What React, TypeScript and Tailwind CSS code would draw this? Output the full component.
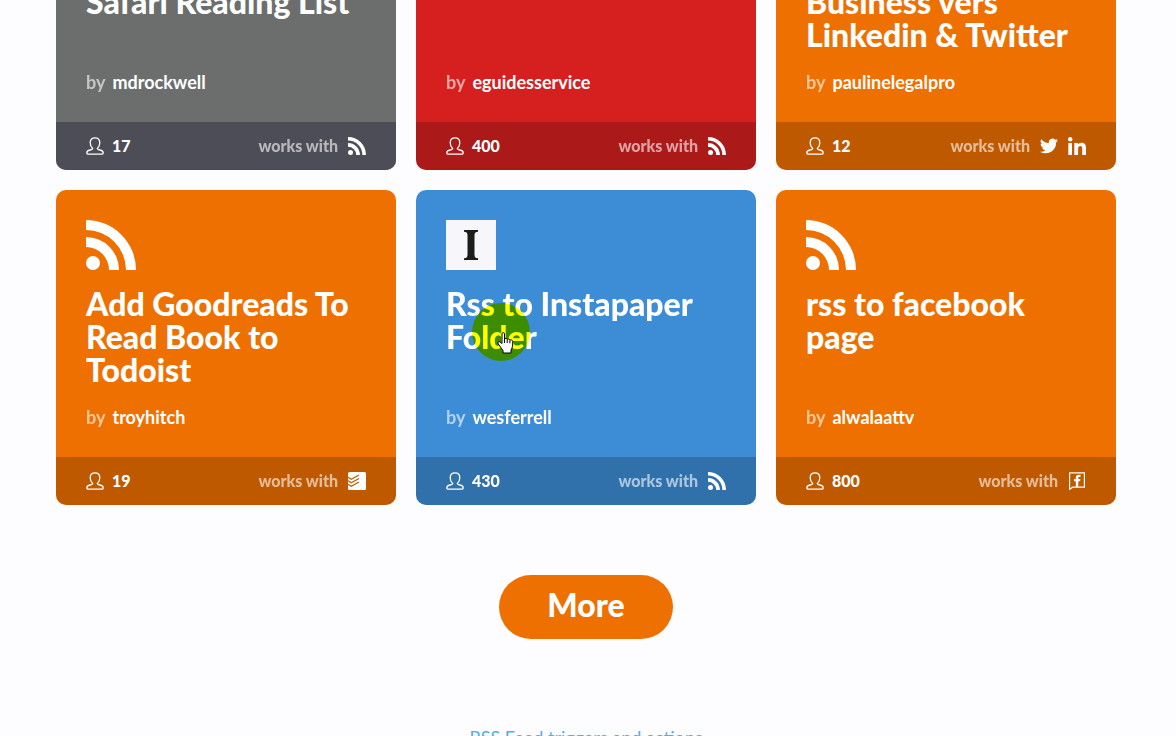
import React from "react";

type Icon = "rss" | "twitter" | "linkedin" | "todoist" | "facebook";

function Rss({ className }: { className: string }) {
  return (
    <svg viewBox="0 0 50 50" className={className} fill="currentColor" aria-hidden="true">
      <circle cx="7" cy="43" r="7" />
      <path d="M0 17a33 33 0 0 1 33 33h-10a23 23 0 0 0-23-23z" />
      <path d="M0 0a50 50 0 0 1 50 50h-10a40 40 0 0 0-40-40z" />
    </svg>
  );
}

function Instapaper({ className }: { className: string }) {
  return (
    <svg viewBox="0 0 50 50" className={className} aria-hidden="true">
      <path fill="#f7f7fb" d="M0 0h50v50H0z" />
      <path
        fill="#1c1c1a"
        d="M18 10h14v1.700c-2.700.3-3.500 1.100-3.500 3.800v19c0 2.700.8 3.500 3.500 3.800V40H18v-1.700c2.700-.3 3.500-1.100 3.500-3.800v-19c0-2.700-.8-3.500-3.500-3.800z"
      />
    </svg>
  );
}

function Person() {
  return (
    <svg viewBox="0 0 18 18" className="size-[18px]" fill="none" stroke="currentColor" strokeWidth="1.300" strokeLinejoin="round" aria-hidden="true">
      <path d="M6.700 11.500C5.300 10.300 4.200 8.300 4.200 5.700 4.200 2.500 6.200.8 9 .8s4.800 1.700 4.800 4.900c0 2.600-1.100 4.600-2.500 5.800.3.900 1.200 1.300 2.600 1.500 2.100.3 3.300 1.300 3.300 3.100 0 .7-.3 1-1 1H1.800c-.7 0-1-.3-1-1 0-1.800 1.200-2.800 3.300-3.100 1.400-.2 2.300-.6 2.600-1.500z" />
    </svg>
  );
}

function ServiceIcon({ name }: { name: Icon }) {
  const size = "size-[18px]";
  if (name === "rss") return <Rss className={size} />;
  if (name === "twitter")
    return (
      <svg viewBox="0 0 24 24" className={size} fill="currentColor" role="img" aria-label="Twitter">
        <path d="M23.950 4.570a10 10 0 0 1-2.820.770 4.960 4.960 0 0 0 2.160-2.720c-.950.560-2 .960-3.130 1.180a4.920 4.920 0 0 0-8.380 4.480C7.690 8.090 4.070 6.130 1.640 3.160a4.920 4.920 0 0 0 1.520 6.570 4.900 4.900 0 0 1-2.230-.610v.060a4.920 4.920 0 0 0 3.950 4.830 5 5 0 0 1-2.210.080 4.940 4.940 0 0 0 4.600 3.420A9.870 9.870 0 0 1 0 19.540a13.990 13.990 0 0 0 7.550 2.210c9.050 0 14-7.500 14-13.980 0-.210 0-.420-.020-.630a9.940 9.940 0 0 0 2.460-2.550z" />
      </svg>
    );
  if (name === "linkedin")
    return (
      <svg viewBox="0 0 18 18" className={size} fill="currentColor" role="img" aria-label="LinkedIn">
        <circle cx="2.200" cy="2.200" r="2.200" />
        <path d="M.3 6h3.700v12H.3zM6.300 6h3.600v1.600c.6-1.100 1.900-1.900 3.700-1.900 3.600 0 4.400 2.300 4.400 5.600V18h-3.800v-5.900c0-1.500-.1-3-1.900-3s-2.200 1.400-2.200 2.900v6H6.300z" />
      </svg>
    );
  if (name === "todoist")
    return (
      <svg viewBox="0 0 18 18" className={size} role="img" aria-label="Todoist">
        <rect width="18" height="18" rx="1.500" fill="currentColor" />
        <path d="M0 5.200 3.300 7.200 11 3M0 8.700l3.300 2L11 6.500M0 12.200l3.300 2L11 10" fill="none" stroke="#c05f00" strokeWidth="1.300" />
      </svg>
    );
  return (
    <svg viewBox="0 0 18 18" className={size} role="img" aria-label="Facebook">
      <path d="M1.600.8h14.800v14.400H4.600L1.600 17.400z" fill="none" stroke="currentColor" strokeWidth="1.200" />
      <path fill="currentColor" d="M7.800 14.800V9.200H6V7h1.800V5.700c0-2 1.100-3 3-3h1.700v2.200h-1.100c-.8 0-1.100.3-1.100 1V7h2.100l-.3 2.200h-1.800v5.600z" />
    </svg>
  );
}

function Pointer() {
  return (
    <>
      <span className="pointer-events-none absolute left-14 top-[113px] size-[58px] rounded-full bg-[#ffff00] mix-blend-multiply" />
      <svg viewBox="0 0 17 22" className="pointer-events-none absolute left-[81px] top-[142px] h-[22px] w-[17px]" aria-hidden="true">
        <path
          d="M5 1.700C5 .3 7.500.3 7.500 1.700V7c.3-1 2.500-.9 2.700.4.500-.8 2.500-.6 2.700.8.700-.7 2.800-.3 2.800 1.300 0 3.500 0 6-1.700 8.500V21H6v-2.500C4.500 16.500 3 14 1.300 12c-1-1.300-.2-2.900 1.500-2.200L5 11.500z"
          fill="#fff"
          stroke="#000"
          strokeWidth="1"
          strokeLinejoin="round"
        />
        <path d="M7.500 7v4M10.200 7.500v3.500M12.900 8.300v3" stroke="#000" fill="none" />
      </svg>
    </>
  );
}

type CardProps = {
  tone: string;
  shade?: string;
  logo?: React.ReactNode;
  title: string;
  author: string;
  users: number;
  services: Icon[];
  continued?: boolean;
  children?: React.ReactNode;
};

function Card({ tone, shade = "bg-black/20", logo, title, author, users, services, continued, children }: CardProps) {
  return (
    <article className={`relative isolate overflow-hidden text-white ${tone} ${continued ? "rounded-b-[10px]" : "rounded-[10px]"}`}>
      <div className={`px-[30px] pb-7 ${continued ? "" : "pt-[30px]"}`}>
        {logo}
        <h2 className={`text-[32px] font-black leading-[33px] ${continued ? "-mt-[15px] min-h-[66px]" : "mt-[17px] min-h-[99px]"}`}>{title}</h2>
        <p className="mt-[19px] flex gap-[7px] text-lg font-bold leading-6">
          <span className="opacity-60">by</span>
          <a href="#author">{author}</a>
        </p>
      </div>
      <div className={`flex h-12 items-center justify-between px-[30px] ${shade}`}>
        <span className="flex items-center gap-2 text-base font-black">
          <Person />
          {users}
        </span>
        <span className="flex items-center gap-2.5 text-base font-black">
          <span className="opacity-60">works with</span>
          {services.map((s) => (
            <ServiceIcon key={s} name={s} />
          ))}
        </span>
      </div>
      {children}
    </article>
  );
}

export default function App() {
  const logo = "size-[50px]";
  return (
    <main className="h-screen overflow-hidden bg-[#fdfdff] pl-14 pr-15 font-['Lato',sans-serif]">
      <div className="grid grid-cols-3 gap-5">
        <Card continued tone="bg-[#6c6e6e]" shade="bg-[#4d4d57]" title="Safari Reading List" author="mdrockwell" users={17} services={["rss"]} />
        <Card continued tone="bg-[#d62020]" title="" author="eguidesservice" users={400} services={["rss"]} />
        <Card continued tone="bg-[#ee7000]" title="Business vers Linkedin & Twitter" author="paulinelegalpro" users={12} services={["twitter", "linkedin"]} />
        <Card tone="bg-[#ee7000]" logo={<Rss className={logo} />} title="Add Goodreads To Read Book to Todoist" author="troyhitch" users={19} services={["todoist"]} />
        <Card tone="bg-[#3d8dd6]" logo={<Instapaper className={logo} />} title="Rss to Instapaper Folder" author="wesferrell" users={430} services={["rss"]}>
          <Pointer />
        </Card>
        <Card tone="bg-[#ee7000]" logo={<Rss className={logo} />} title="rss to facebook page" author="alwalaattv" users={800} services={["facebook"]} />
      </div>
      <div className="mt-[70px] flex flex-col items-center">
        <button type="button" className="h-16 rounded-full bg-[#ee7000] px-12 pb-1 text-[32px] font-black text-white">
          More
        </button>
        <a href="#triggers" className="mt-[86px] text-lg leading-6 text-[#4fb0e8]">
          RSS Feed triggers and actions
        </a>
      </div>
    </main>
  );
}
